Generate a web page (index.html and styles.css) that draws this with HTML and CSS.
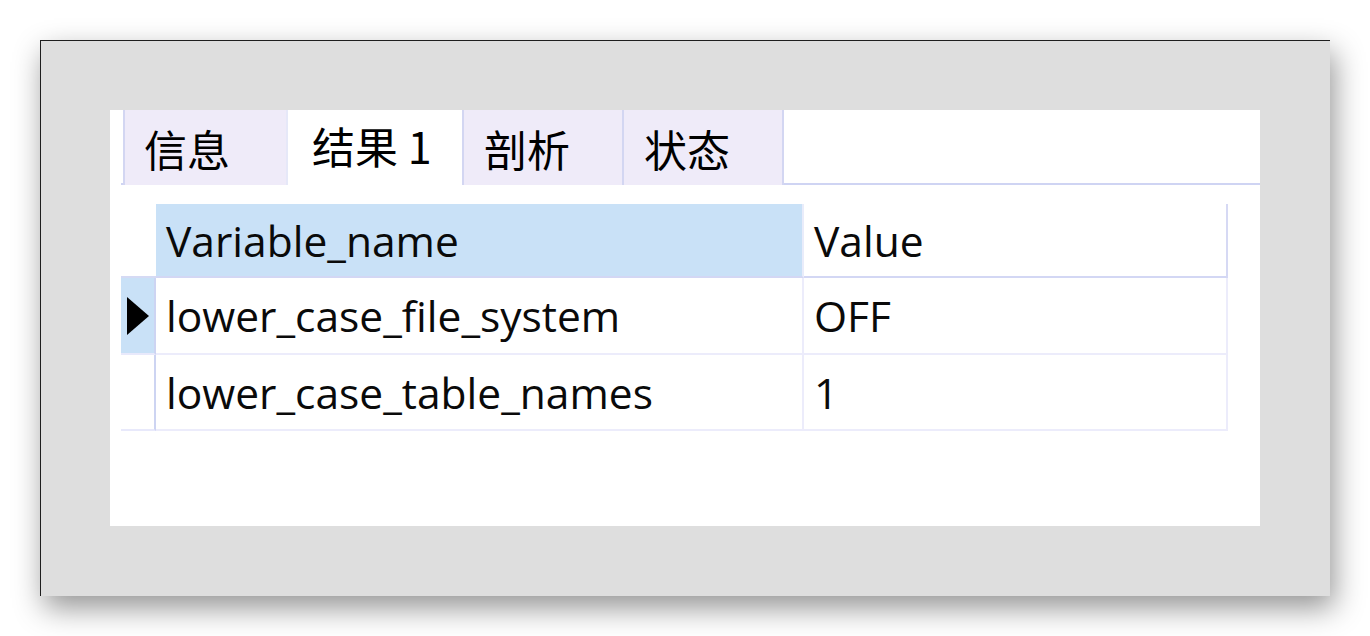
FILE: index.html
```html
<!DOCTYPE html>
<html lang="zh-CN">
<head>
<meta charset="utf-8">
<title>结果</title>
<link rel="stylesheet" href="styles.css">
</head>
<body>
<div class="frame">
  <div class="panel">
    <div class="tabs">
      <div class="tab first">信息</div>
      <div class="tab active">结果 1</div>
      <div class="tab">剖析</div>
      <div class="tab">状态</div>
    </div>
    <div class="grid">
      <div class="corner"></div>
      <div class="hcell h1">Variable_name</div>
      <div class="hcell h2">Value</div>

      <div class="ind selected">
        <svg width="22" height="38" viewBox="0 0 22 38"><polygon points="0,0 22,19 0,38" fill="#000"/></svg>
      </div>
      <div class="cell">lower_case_file_system</div>
      <div class="cell">OFF</div>

      <div class="ind"></div>
      <div class="cell">lower_case_table_names</div>
      <div class="cell">1</div>
    </div>
  </div>
</div>
</body>
</html>
```
FILE: styles.css
```css
html, body {
  margin: 0;
  padding: 0;
  background: #ffffff;
}
body {
  width: 1370px;
  height: 636px;
  overflow: hidden;
  font-family: "Open Sans", "Noto Sans CJK SC", sans-serif;
  color: #0a0a0a;
}
.frame {
  box-sizing: border-box;
  margin: 40px 0 0 40px;
  width: 1290px;
  height: 556px;
  background: #dedede;
  border-top: 1px solid #1e1e1e;
  border-left: 1px solid #1e1e1e;
  box-shadow: 4px 12px 28px rgba(0, 0, 0, 0.42);
  padding: 69px 0 0 69px;
}
.panel {
  width: 1150px;
  height: 416px;
  background: #ffffff;
}
.tabs {
  display: flex;
  height: 75px;
  margin-left: 11px;
  border-bottom: 2px solid #cfd4f3;
  box-sizing: border-box;
}
.tab {
  box-sizing: border-box;
  width: 162px;
  height: 75px;
  background: #efebf9;
  border-left: 2px solid #d3d6f2;
  border-right: 2px solid #d3d6f2;
  margin-left: -2px;
  display: flex;
  align-items: center;
  padding-left: 20px;
  font-family: "Noto Sans CJK SC", sans-serif;
  font-size: 43px;
  font-weight: 400;
  color: #000;
}
.tab.first {
  margin-left: 2px;
  width: 165px;
  padding-left: 19px;
}
.tab.active {
  width: 178px;
  background: #ffffff;
  margin-bottom: -2px;
  border-color: #e6e8f8;
  padding-left: 24px;
  padding-bottom: 6px;
}
.grid {
  display: grid;
  grid-template-columns: 35px 648px 424px;
  grid-template-rows: 74px 77px 76px;
  margin: 19px 0 0 11px;
  font-size: 42.5px;
  font-weight: 500;
}
.grid > div {
  box-sizing: border-box;
  display: flex;
  align-items: center;
}
.corner {
  border-bottom: 2px solid #d5daf4;
}
.hcell {
  padding-left: 10px;
  border-bottom: 2px solid #d3d7f4;
}
.h1 {
  background: #c9e1f7;
  border-right: 2px solid #e9ecfa;
}
.h2 {
  background: #ffffff;
  border-right: 2px solid #d6d9f4;
}
.ind {
  border-right: 2px solid #cdd4f2;
  border-bottom: 2px solid #e8e9fb;
  padding-left: 6px;
}
.ind.selected {
  background: #c9e1f7;
}
.cell {
  padding-left: 10px;
  border-right: 2px solid #ececfb;
  border-bottom: 2px solid #ececfb;
}
```
